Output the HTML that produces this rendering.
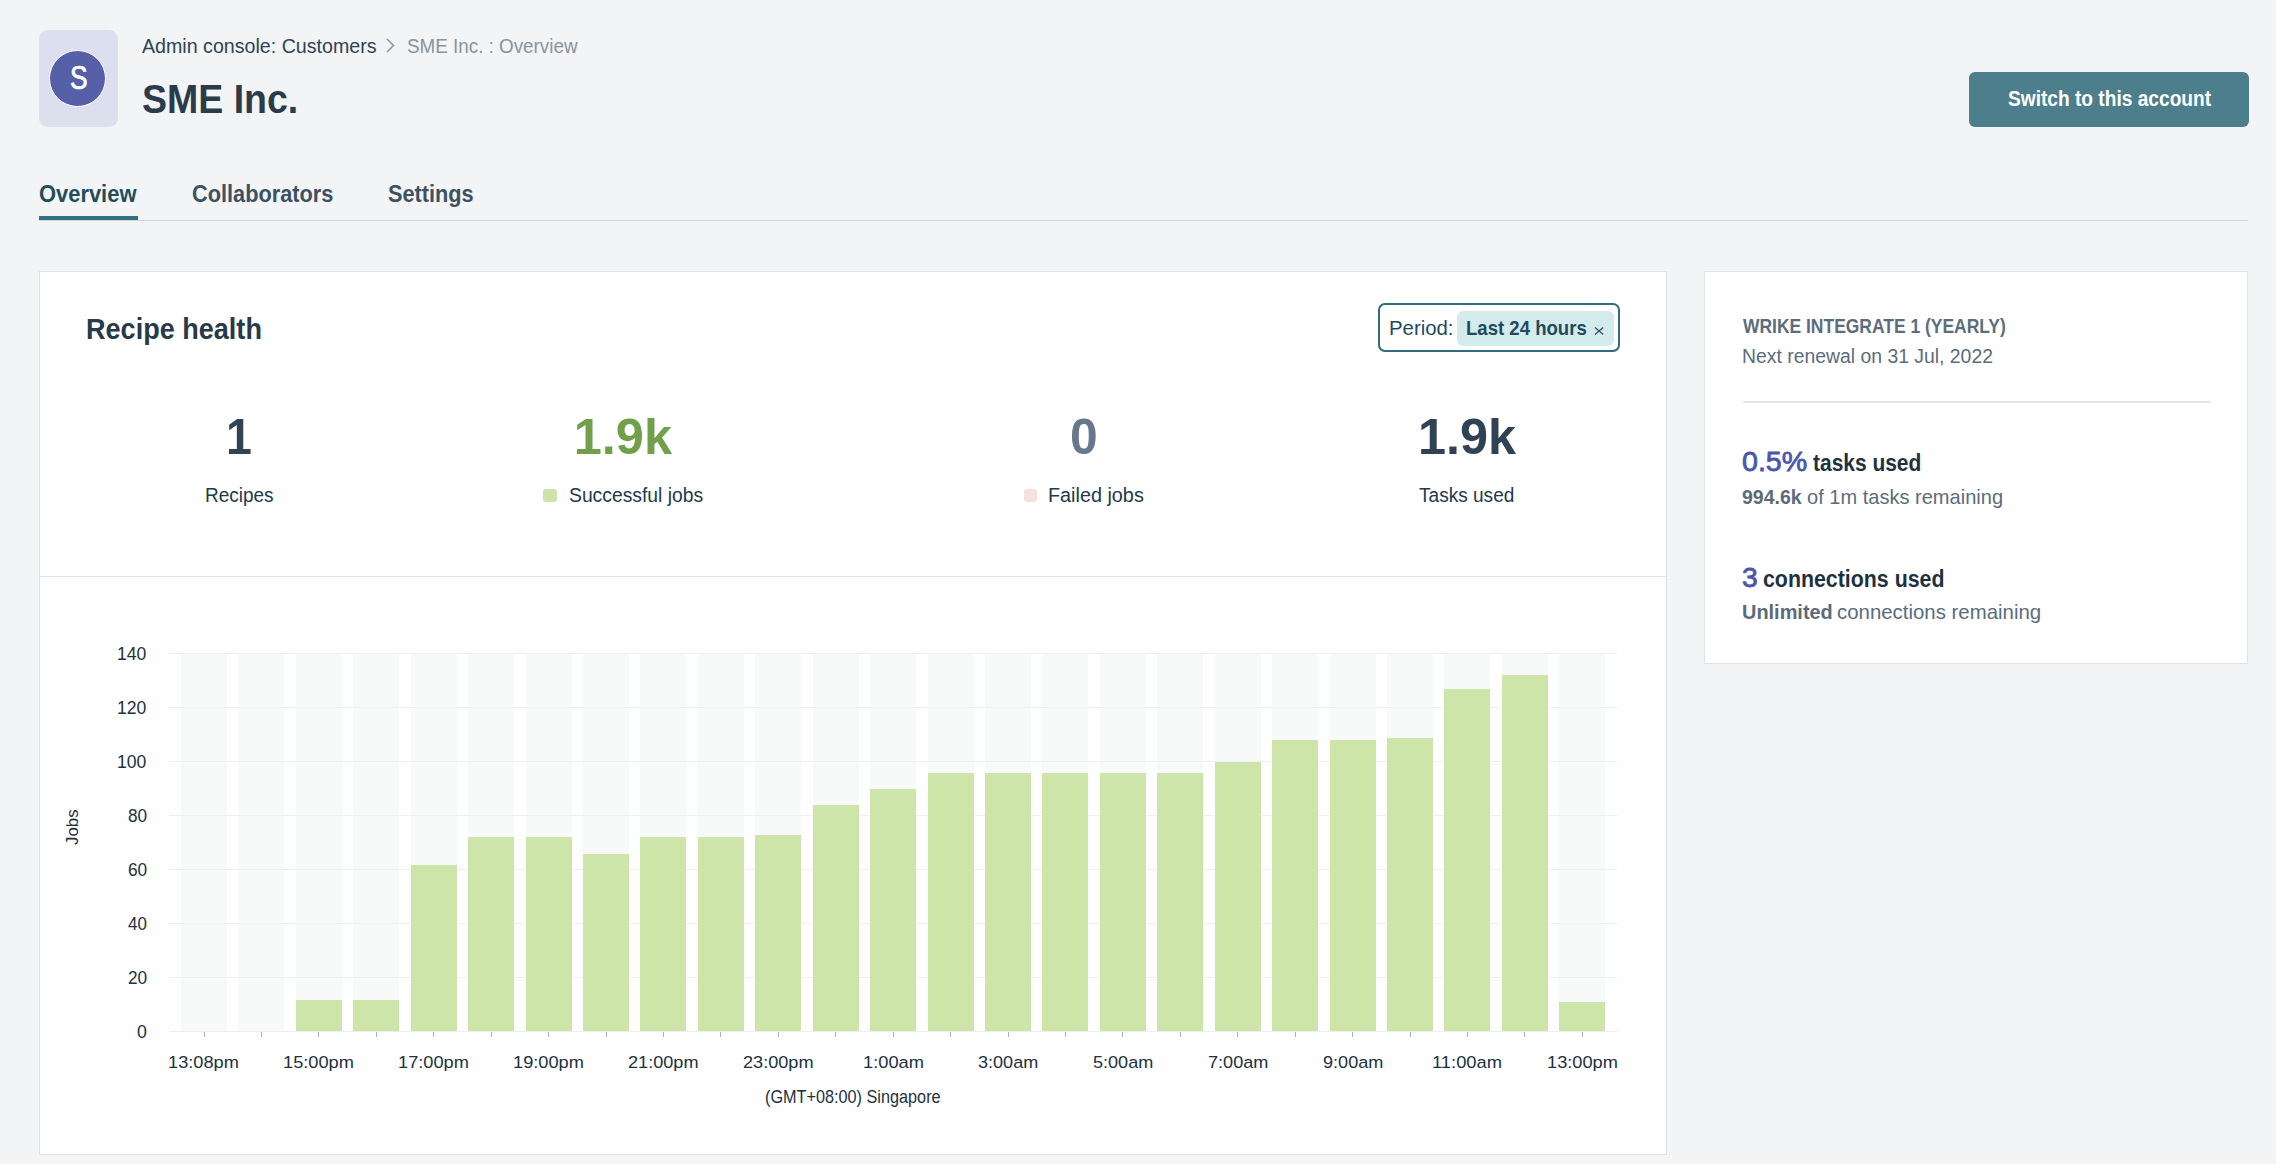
<!DOCTYPE html>
<html><head><meta charset="utf-8">
<style>
html,body{margin:0;padding:0;}
body{width:2276px;height:1164px;background:#f3f4f6;position:relative;overflow:hidden;font-family:"Liberation Sans",sans-serif;}
.t{position:absolute;white-space:nowrap;line-height:1;transform-origin:0 0;}
.box{position:absolute;box-sizing:border-box;}
.stripe{position:absolute;top:653px;width:46px;height:378px;background:#f8f9f9;}
.bar{position:absolute;width:46px;background:#cee5aa;}
.grid{position:absolute;left:169px;width:1448px;height:1px;background:#eef0f2;}
.tick{position:absolute;top:1032px;width:1px;height:5px;background:#a9b2ba;}
</style></head><body>
<!-- avatar -->
<div class="box" style="left:39px;top:30px;width:79px;height:97px;border-radius:9px;background:#dcdfee;"></div>
<div class="box" style="left:48.8px;top:50px;width:57.4px;height:57.4px;border-radius:50%;background:#5660a8;border:1.5px solid #ffffff;"></div>
<svg style="position:absolute;left:0;top:0" width="2276" height="200">
  <polyline points="387,39 393.5,45.5 387,52" fill="none" stroke="#8e9aa5" stroke-width="1.6"/>
</svg>
<div class="t" style="left:69.6px;top:61px;font-size:33px;color:#fff;transform:scaleX(0.8);-webkit-text-stroke:0.7px #fff;">S</div>
<!-- tabs -->
<div class="box" style="left:39px;top:216px;width:99px;height:3.5px;background:#336f80;"></div>
<div class="box" style="left:39px;top:219.5px;width:2209px;height:1.5px;background:#d1d8dc;"></div>
<!-- button -->
<div class="box" style="left:1969px;top:72px;width:280px;height:55px;border-radius:6px;background:#4d7e8c;"></div>
<!-- card 1 -->
<div class="box" style="left:39px;top:271px;width:1628px;height:884px;background:#ffffff;border:1px solid #dfe3e7;"></div>
<div class="box" style="left:40px;top:576px;width:1626px;height:1px;background:#e0e4e7;"></div>
<div class="box" style="left:40px;top:577px;width:1626px;height:577px;background:#fefefe;"></div>
<!-- period pill -->
<div class="box" style="left:1378px;top:303px;width:242px;height:49px;border:2px solid #326b7c;border-radius:7px;background:#fff;"></div>
<div class="box" style="left:1457px;top:311px;width:157px;height:35px;border-radius:6px;background:#d4ebed;"></div>
<svg style="position:absolute;left:1594px;top:327px" width="11" height="9">
  <path d="M1 0.6 L9.2 7.6 M9.2 0.6 L1 7.6" stroke="#2d5565" stroke-width="1.3" fill="none"/>
</svg>
<!-- legend squares -->
<div class="box" style="left:542.5px;top:488.6px;width:14.8px;height:13.3px;border-radius:3px;background:#cde4a8;"></div>
<div class="box" style="left:1023.5px;top:488.6px;width:13.2px;height:13.1px;border-radius:3px;background:#f5e1dc;"></div>
<!-- right card -->
<div class="box" style="left:1704px;top:271px;width:544px;height:393px;background:#ffffff;border:1px solid #e0e4e7;"></div>
<div class="box" style="left:1743px;top:401px;width:468px;height:1.5px;background:#e3e6e9;"></div>
<!-- chart -->
<div class="stripe" style="left:181.00px"></div>
<div class="stripe" style="left:238.43px"></div>
<div class="stripe" style="left:295.86px"></div>
<div class="stripe" style="left:353.29px"></div>
<div class="stripe" style="left:410.72px"></div>
<div class="stripe" style="left:468.15px"></div>
<div class="stripe" style="left:525.58px"></div>
<div class="stripe" style="left:583.01px"></div>
<div class="stripe" style="left:640.44px"></div>
<div class="stripe" style="left:697.87px"></div>
<div class="stripe" style="left:755.30px"></div>
<div class="stripe" style="left:812.73px"></div>
<div class="stripe" style="left:870.16px"></div>
<div class="stripe" style="left:927.59px"></div>
<div class="stripe" style="left:985.02px"></div>
<div class="stripe" style="left:1042.45px"></div>
<div class="stripe" style="left:1099.88px"></div>
<div class="stripe" style="left:1157.31px"></div>
<div class="stripe" style="left:1214.74px"></div>
<div class="stripe" style="left:1272.17px"></div>
<div class="stripe" style="left:1329.60px"></div>
<div class="stripe" style="left:1387.03px"></div>
<div class="stripe" style="left:1444.46px"></div>
<div class="stripe" style="left:1501.89px"></div>
<div class="stripe" style="left:1559.32px"></div>
<div class="grid" style="top:652.70px"></div>
<div class="grid" style="top:706.73px"></div>
<div class="grid" style="top:760.76px"></div>
<div class="grid" style="top:814.79px"></div>
<div class="grid" style="top:868.82px"></div>
<div class="grid" style="top:922.85px"></div>
<div class="grid" style="top:976.88px"></div>
<div class="grid" style="top:1030.91px"></div>
<div class="tick" style="left:203.50px"></div>
<div class="tick" style="left:260.93px"></div>
<div class="bar" style="left:295.86px;top:999.58px;height:32.42px"></div>
<div class="tick" style="left:318.36px"></div>
<div class="bar" style="left:353.29px;top:999.58px;height:32.42px"></div>
<div class="tick" style="left:375.79px"></div>
<div class="bar" style="left:410.72px;top:864.51px;height:167.49px"></div>
<div class="tick" style="left:433.22px"></div>
<div class="bar" style="left:468.15px;top:837.49px;height:194.51px"></div>
<div class="tick" style="left:490.65px"></div>
<div class="bar" style="left:525.58px;top:837.49px;height:194.51px"></div>
<div class="tick" style="left:548.08px"></div>
<div class="bar" style="left:583.01px;top:853.70px;height:178.30px"></div>
<div class="tick" style="left:605.51px"></div>
<div class="bar" style="left:640.44px;top:837.49px;height:194.51px"></div>
<div class="tick" style="left:662.94px"></div>
<div class="bar" style="left:697.87px;top:837.49px;height:194.51px"></div>
<div class="tick" style="left:720.37px"></div>
<div class="bar" style="left:755.30px;top:834.79px;height:197.21px"></div>
<div class="tick" style="left:777.80px"></div>
<div class="bar" style="left:812.73px;top:805.07px;height:226.93px"></div>
<div class="tick" style="left:835.23px"></div>
<div class="bar" style="left:870.16px;top:788.87px;height:243.13px"></div>
<div class="tick" style="left:892.66px"></div>
<div class="bar" style="left:927.59px;top:772.66px;height:259.34px"></div>
<div class="tick" style="left:950.09px"></div>
<div class="bar" style="left:985.02px;top:772.66px;height:259.34px"></div>
<div class="tick" style="left:1007.52px"></div>
<div class="bar" style="left:1042.45px;top:772.66px;height:259.34px"></div>
<div class="tick" style="left:1064.95px"></div>
<div class="bar" style="left:1099.88px;top:772.66px;height:259.34px"></div>
<div class="tick" style="left:1122.38px"></div>
<div class="bar" style="left:1157.31px;top:772.66px;height:259.34px"></div>
<div class="tick" style="left:1179.81px"></div>
<div class="bar" style="left:1214.74px;top:761.85px;height:270.15px"></div>
<div class="tick" style="left:1237.24px"></div>
<div class="bar" style="left:1272.17px;top:740.24px;height:291.76px"></div>
<div class="tick" style="left:1294.67px"></div>
<div class="bar" style="left:1329.60px;top:740.24px;height:291.76px"></div>
<div class="tick" style="left:1352.10px"></div>
<div class="bar" style="left:1387.03px;top:737.54px;height:294.46px"></div>
<div class="tick" style="left:1409.53px"></div>
<div class="bar" style="left:1444.46px;top:688.91px;height:343.09px"></div>
<div class="tick" style="left:1466.96px"></div>
<div class="bar" style="left:1501.89px;top:675.40px;height:356.60px"></div>
<div class="tick" style="left:1524.39px"></div>
<div class="bar" style="left:1559.32px;top:1002.28px;height:29.72px"></div>
<div class="tick" style="left:1581.82px"></div>
<div class="box" style="left:169px;top:1031px;width:1448px;height:1px;background:#eceef0;"></div>
<div class="t" style="left:63.6px;top:844.8px;font-size:17px;color:#1d3140;transform:rotate(-90deg) scaleX(0.99);">Jobs</div>
<div class="t" style="left:141.90px;top:36px;font-size:20.8px;color:#2d4352;transform:scaleX(0.9437);">Admin console: Customers</div>
<div class="t" style="left:406.69px;top:36px;font-size:20.8px;color:#8894a0;transform:scaleX(0.9052);">SME Inc. : Overview</div>
<div class="t" style="left:142.21px;top:79px;font-size:40.7px;font-weight:700;color:#2a3c4a;transform:scaleX(0.9215);">SME Inc.</div>
<div class="t" style="left:38.66px;top:183px;font-size:23.5px;font-weight:700;color:#1f4e5b;transform:scaleX(0.9322);">Overview</div>
<div class="t" style="left:191.97px;top:183px;font-size:23.5px;font-weight:700;color:#3c5161;transform:scaleX(0.9251);">Collaborators</div>
<div class="t" style="left:387.75px;top:183px;font-size:23.5px;font-weight:700;color:#3c5161;transform:scaleX(0.9240);">Settings</div>
<div class="t" style="left:2007.66px;top:88px;font-size:21.2px;font-weight:700;color:#ffffff;transform:scaleX(0.9032);">Switch to this account</div>
<div class="t" style="left:86.41px;top:314px;font-size:29.5px;font-weight:700;color:#263a4a;transform:scaleX(0.9171);">Recipe health</div>
<div class="t" style="left:1388.95px;top:317px;font-size:21px;color:#1f4a5a;transform:scaleX(0.9698);">Period:</div>
<div class="t" style="left:1465.86px;top:317px;font-size:21px;font-weight:700;color:#1f4a5a;transform:scaleX(0.8842);">Last 24 hours</div>
<div class="t" style="left:226.09px;top:412px;font-size:50.5px;font-weight:700;color:#2f4354;transform:scaleX(0.9209);">1</div>
<div class="t" style="left:573.75px;top:412px;font-size:50.5px;font-weight:700;color:#72a04a;">1.9k</div>
<div class="t" style="left:1069.85px;top:412px;font-size:50.5px;font-weight:700;color:#66788a;transform:scaleX(0.9852);">0</div>
<div class="t" style="left:1417.85px;top:412px;font-size:50.5px;font-weight:700;color:#2f4354;transform:scaleX(0.9984);">1.9k</div>
<div class="t" style="left:204.97px;top:486px;font-size:19.9px;color:#23394a;transform:scaleX(0.9548);">Recipes</div>
<div class="t" style="left:568.63px;top:486px;font-size:19.9px;color:#23394a;transform:scaleX(0.9707);">Successful jobs</div>
<div class="t" style="left:1048.11px;top:486px;font-size:19.9px;color:#23394a;transform:scaleX(0.9959);">Failed jobs</div>
<div class="t" style="left:1419.02px;top:486px;font-size:19.9px;color:#23394a;transform:scaleX(0.9583);">Tasks used</div>
<div class="t" style="left:1743.00px;top:316px;font-size:20.5px;font-weight:700;color:#5b6c7c;transform:scaleX(0.8514);">WRIKE INTEGRATE 1 (YEARLY)</div>
<div class="t" style="left:1742.01px;top:347px;font-size:19.5px;color:#5b6c7c;transform:scaleX(0.9935);">Next renewal on 31 Jul, 2022</div>
<div class="t" style="left:1741.91px;top:447px;font-size:28.5px;color:#4a56ac;transform:scaleX(1.0044);-webkit-text-stroke:0.8px #4a56ac;">0.5%</div>
<div class="t" style="left:1812.82px;top:452px;font-size:23px;font-weight:700;color:#1e3141;transform:scaleX(0.9109);">tasks used</div>
<div class="t" style="left:1742.13px;top:487px;font-size:20.3px;font-weight:700;color:#5c6b78;transform:scaleX(0.9610);">994.6k</div>
<div class="t" style="left:1806.53px;top:487px;font-size:20.8px;color:#5b6c7c;transform:scaleX(0.9638);">of 1m tasks remaining</div>
<div class="t" style="left:1741.92px;top:563px;font-size:28.5px;color:#4a56ac;transform:scaleX(0.9924);-webkit-text-stroke:0.8px #4a56ac;">3</div>
<div class="t" style="left:1762.96px;top:568px;font-size:23px;font-weight:700;color:#1e3141;transform:scaleX(0.9282);">connections used</div>
<div class="t" style="left:1742.02px;top:602px;font-size:20.3px;font-weight:700;color:#5c6b78;transform:scaleX(0.9824);">Unlimited</div>
<div class="t" style="left:1836.72px;top:602px;font-size:20.8px;color:#5b6c7c;transform:scaleX(0.9808);">connections remaining</div>
<div class="t" style="left:117.39px;top:646px;font-size:17.5px;color:#1d3140;transform:scaleX(1.0049);">140</div>
<div class="t" style="left:117.39px;top:700px;font-size:17.5px;color:#1d3140;transform:scaleX(1.0049);">120</div>
<div class="t" style="left:117.39px;top:754px;font-size:17.5px;color:#1d3140;transform:scaleX(1.0049);">100</div>
<div class="t" style="left:127.61px;top:808px;font-size:17.5px;color:#1d3140;transform:scaleX(0.9817);">80</div>
<div class="t" style="left:127.51px;top:862px;font-size:17.5px;color:#1d3140;transform:scaleX(0.9871);">60</div>
<div class="t" style="left:127.91px;top:916px;font-size:17.5px;color:#1d3140;transform:scaleX(0.9657);">40</div>
<div class="t" style="left:127.51px;top:970px;font-size:17.5px;color:#1d3140;transform:scaleX(0.9871);">20</div>
<div class="t" style="left:136.89px;top:1024px;font-size:17.5px;color:#1d3140;transform:scaleX(1.0118);">0</div>
<div class="t" style="left:168.45px;top:1055px;font-size:16.8px;color:#1d3140;transform:scaleX(1.0858);">13:08pm</div>
<div class="t" style="left:283.31px;top:1055px;font-size:16.8px;color:#1d3140;transform:scaleX(1.0858);">15:00pm</div>
<div class="t" style="left:398.17px;top:1055px;font-size:16.8px;color:#1d3140;transform:scaleX(1.0858);">17:00pm</div>
<div class="t" style="left:513.03px;top:1055px;font-size:16.8px;color:#1d3140;transform:scaleX(1.0858);">19:00pm</div>
<div class="t" style="left:628.33px;top:1055px;font-size:16.8px;color:#1d3140;transform:scaleX(1.0790);">21:00pm</div>
<div class="t" style="left:743.19px;top:1055px;font-size:16.8px;color:#1d3140;transform:scaleX(1.0790);">23:00pm</div>
<div class="t" style="left:862.60px;top:1055px;font-size:16.8px;color:#1d3140;transform:scaleX(1.0886);">1:00am</div>
<div class="t" style="left:978.12px;top:1055px;font-size:16.8px;color:#1d3140;transform:scaleX(1.0765);">3:00am</div>
<div class="t" style="left:1092.98px;top:1055px;font-size:16.8px;color:#1d3140;transform:scaleX(1.0765);">5:00am</div>
<div class="t" style="left:1207.63px;top:1055px;font-size:16.8px;color:#1d3140;transform:scaleX(1.0805);">7:00am</div>
<div class="t" style="left:1322.60px;top:1055px;font-size:16.8px;color:#1d3140;transform:scaleX(1.0785);">9:00am</div>
<div class="t" style="left:1432.35px;top:1055px;font-size:16.8px;color:#1d3140;transform:scaleX(1.0932);">11:00am</div>
<div class="t" style="left:1546.77px;top:1055px;font-size:16.8px;color:#1d3140;transform:scaleX(1.0858);">13:00pm</div>
<div class="t" style="left:765.28px;top:1089px;font-size:17.7px;color:#1d3140;transform:scaleX(0.9182);">(GMT+08:00) Singapore</div>
</body></html>
